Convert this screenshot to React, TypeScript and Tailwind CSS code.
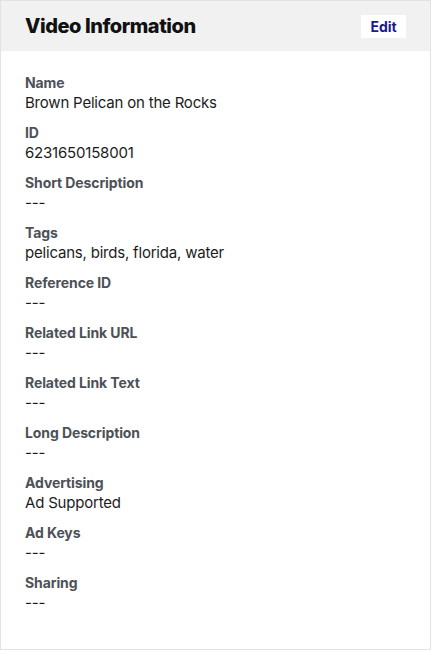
import React from "react";

const fields = [
  { label: "Name", value: "Brown Pelican on the Rocks" },
  { label: "ID", value: "6231650158001" },
  { label: "Short Description", value: "---" },
  { label: "Tags", value: "pelicans, birds, florida, water" },
  { label: "Reference ID", value: "---" },
  { label: "Related Link URL", value: "---" },
  { label: "Related Link Text", value: "---" },
  { label: "Long Description", value: "---" },
  { label: "Advertising", value: "Ad Supported" },
  { label: "Ad Keys", value: "---" },
  { label: "Sharing", value: "---" },
];

export default function App() {
  return (
    <div className="w-[431px] h-[650px] bg-white font-['Inter',sans-serif]">
      <div className="h-full border border-[#e2e2e2] flex flex-col">
        <div className="h-[50px] bg-[#f1f1f1] flex items-center justify-between pl-6 pr-6 shrink-0">
          <h2 className="text-[20px] font-extrabold text-[#111] tracking-[-0.45px]">Video Information</h2>
          <button className="bg-white h-[23px] w-[45px] text-[14px] font-bold text-[#1b1a8c]">
            Edit
          </button>
        </div>
        <div className="flex flex-col gap-[10px] px-6 pt-[22px]">
          {fields.map((f) => (
            <div key={f.label} className="flex flex-col">
              <div className="text-[14px] leading-[20px] font-bold text-[#4d5157] tracking-[-0.1px]">{f.label}</div>
              <div className="text-[15px] leading-[20px] text-[#1c1c1c] tracking-[-0.2px]">{f.value}</div>
            </div>
          ))}
        </div>
      </div>
    </div>
  );
}
